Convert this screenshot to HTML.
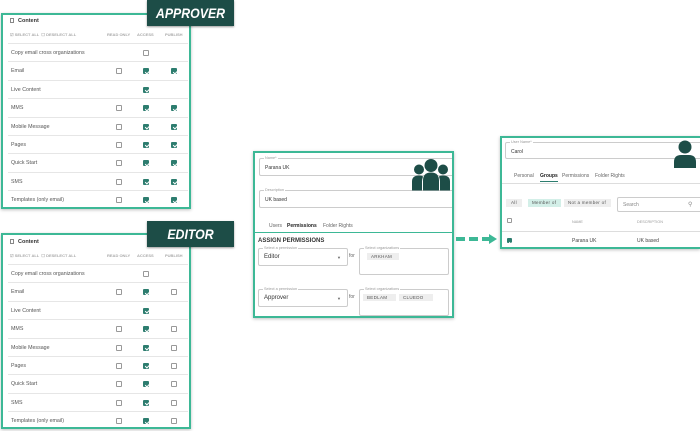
<!DOCTYPE html>
<html><head><meta charset="utf-8"><style>
*{box-sizing:border-box;margin:0;padding:0}
body{width:700px;height:430px;background:#fff;position:relative;overflow:hidden;font-family:"Liberation Sans",sans-serif;color:#444}
.a{position:absolute}
.panel{position:absolute;left:1px;width:190px;height:196px;border:2px solid #3db896;background:#fff;box-shadow:0 1px 3px rgba(0,0,0,.25)}
.hd{position:absolute;left:7px;top:3px;font-size:5.5px;color:#333;font-weight:bold}
.hd i{display:inline-block;width:4px;height:5px;border:1px solid #888;margin-right:4px;vertical-align:-1px}
.sel{position:absolute;left:7px;top:17px;font-size:4px;color:#aaa;font-weight:bold;width:176px}
.sel span{position:absolute;top:0}
.rows{position:absolute;left:5px;top:28px;width:180px;border-top:1px solid #e6e6e6}
.r{position:relative;height:18.4px;border-bottom:1px solid #e6e6e6;font-size:5.3px;color:#555}
.r b{font-weight:normal;position:absolute;left:3px;top:6px}
.cb{position:absolute;top:6px;width:6px;height:6px;border:1px solid #999;border-radius:1px}
.ck{background:#2d7d6f;border-color:#2d7d6f}
.ck:after{content:"";position:absolute;left:1.5px;top:0.5px;width:1.5px;height:2.5px;border:solid #fff;border-width:0 .8px .8px 0;transform:rotate(45deg)}
.c1{left:108px}.c2{left:135px}.c3{left:163px}
.lab{position:absolute;left:147px;width:87px;height:26px;background:#1d4d47;color:#fff;box-shadow:0 1px 2px rgba(0,0,0,.4)}
.lab span{position:absolute;left:0;right:0;top:0;text-align:center;line-height:26px;font-weight:bold;font-style:italic;font-size:14px;transform:scaleX(.88)}
.fld{position:absolute;border:1px solid #ccc;border-radius:2px;font-size:5px;color:#333}
.fld .l{position:absolute;top:-3px;left:4px;background:#fff;padding:0 1px;font-size:3.8px;color:#999}
.fld .v{position:absolute;left:5px;top:6px}
.chip{position:absolute;background:#eee;font-size:4.5px;color:#555;line-height:7px;padding:0 4px;letter-spacing:.3px}
.t{position:absolute;font-size:5px;color:#666}
</style></head><body>

<div class="panel" style="top:13px">
 <div class="hd"><i></i>Content</div>
 <div class="sel"><span style="left:0">☑ SELECT ALL &nbsp;☐ DESELECT ALL</span><span style="left:97px">READ ONLY</span><span style="left:127px">ACCESS</span><span style="left:155px">PUBLISH</span></div>
 <div class="rows">
  <div class="r"><b>Copy email cross organizations</b><i class="cb c2"></i></div>
  <div class="r"><b>Email</b><i class="cb c1"></i><i class="cb c2 ck"></i><i class="cb c3 ck"></i></div>
  <div class="r"><b>Live Content</b><i class="cb c2 ck"></i></div>
  <div class="r"><b>MMS</b><i class="cb c1"></i><i class="cb c2 ck"></i><i class="cb c3 ck"></i></div>
  <div class="r"><b>Mobile Message</b><i class="cb c1"></i><i class="cb c2 ck"></i><i class="cb c3 ck"></i></div>
  <div class="r"><b>Pages</b><i class="cb c1"></i><i class="cb c2 ck"></i><i class="cb c3 ck"></i></div>
  <div class="r"><b>Quick Start</b><i class="cb c1"></i><i class="cb c2 ck"></i><i class="cb c3 ck"></i></div>
  <div class="r"><b>SMS</b><i class="cb c1"></i><i class="cb c2 ck"></i><i class="cb c3 ck"></i></div>
  <div class="r" style="border:0"><b>Templates (only email)</b><i class="cb c1"></i><i class="cb c2 ck"></i><i class="cb c3 ck"></i></div>
 </div>
</div>
<div class="lab" style="top:0"><span>APPROVER</span></div>

<div class="panel" style="top:233px">
 <div class="hd" style="top:4px"><i></i>Content</div>
 <div class="sel" style="top:18px"><span style="left:0">☑ SELECT ALL &nbsp;☐ DESELECT ALL</span><span style="left:97px">READ ONLY</span><span style="left:127px">ACCESS</span><span style="left:155px">PUBLISH</span></div>
 <div class="rows" style="top:29px">
  <div class="r"><b>Copy email cross organizations</b><i class="cb c2"></i></div>
  <div class="r"><b>Email</b><i class="cb c1"></i><i class="cb c2 ck"></i><i class="cb c3"></i></div>
  <div class="r"><b>Live Content</b><i class="cb c2 ck"></i></div>
  <div class="r"><b>MMS</b><i class="cb c1"></i><i class="cb c2 ck"></i><i class="cb c3"></i></div>
  <div class="r"><b>Mobile Message</b><i class="cb c1"></i><i class="cb c2 ck"></i><i class="cb c3"></i></div>
  <div class="r"><b>Pages</b><i class="cb c1"></i><i class="cb c2 ck"></i><i class="cb c3"></i></div>
  <div class="r"><b>Quick Start</b><i class="cb c1"></i><i class="cb c2 ck"></i><i class="cb c3"></i></div>
  <div class="r"><b>SMS</b><i class="cb c1"></i><i class="cb c2 ck"></i><i class="cb c3"></i></div>
  <div class="r" style="border:0"><b>Templates (only email)</b><i class="cb c1"></i><i class="cb c2 ck"></i><i class="cb c3"></i></div>
 </div>
</div>
<div class="lab" style="top:221px"><span>EDITOR</span></div>

<div class="a" style="left:253px;top:151px;width:201px;height:167px;border:2px solid #3db896;background:#fff;overflow:hidden;box-shadow:0 1px 3px rgba(0,0,0,.25)">
 <div class="fld" style="left:4px;top:5px;width:200px;height:18px"><span class="l">Name*</span><span class="v">Parana UK</span></div>
 <div class="fld" style="left:4px;top:37px;width:200px;height:18px"><span class="l">Description</span><span class="v">UK based</span></div>
 <svg class="a" style="left:156px;top:5px" width="40" height="33" viewBox="0 0 40 32" fill="#1d4d47">
  <circle cx="20" cy="7" r="6.5"/><circle cx="8" cy="11" r="5"/><circle cx="32" cy="11" r="5"/>
  <path d="M12 32V22q0-8 8-8t8 8v10z"/><path d="M1 32V23q0-6 7-6q3 0 4 1q-1 3-1 5v9z"/><path d="M39 32V23q0-6-7-6q-3 0-4 1q1 3 1 5v9z"/>
 </svg>
 <div class="t" style="left:14px;top:70px">Users</div>
 <div class="t" style="left:32px;top:70px;color:#222;font-weight:bold">Permissions</div>
 <div class="t" style="left:68px;top:70px">Folder Rights</div>
 <div class="a" style="left:0;top:79px;width:201px;height:1px;background:#3db896"></div>
 <div class="a" style="left:3px;top:85px;font-size:6px;font-weight:bold;color:#333">ASSIGN PERMISSIONS</div>
 <div class="fld" style="left:3px;top:95px;width:90px;height:18px"><span class="l">Select a permission</span><span class="v" style="font-size:6px;top:5px">Editor</span><span class="a" style="right:6px;top:6px;font-size:4px;color:#666">▼</span></div>
 <div class="t" style="left:94px;top:100px">for</div>
 <div class="fld" style="left:104px;top:95px;width:90px;height:27px"><span class="l">Select organizations</span></div>
 <div class="chip" style="left:112px;top:100px;width:32px">ARKHAM</div>
 <div class="fld" style="left:3px;top:136px;width:90px;height:18px"><span class="l">Select a permission</span><span class="v" style="font-size:6px;top:5px">Approver</span><span class="a" style="right:6px;top:6px;font-size:4px;color:#666">▼</span></div>
 <div class="t" style="left:94px;top:141px">for</div>
 <div class="fld" style="left:104px;top:136px;width:90px;height:27px"><span class="l">Select organizations</span></div>
 <div class="chip" style="left:108px;top:141px;width:33px">BEDLAM</div>
 <div class="chip" style="left:144px;top:141px;width:34px">CLUEDO</div>
</div>

<div class="a" style="left:456px;top:237px;width:9px;height:4px;background:#3db896"></div>
<div class="a" style="left:469px;top:237px;width:9px;height:4px;background:#3db896"></div>
<div class="a" style="left:482px;top:237px;width:8px;height:4px;background:#3db896"></div>
<div class="a" style="left:489px;top:234px;width:0;height:0;border-left:8px solid #3db896;border-top:5px solid transparent;border-bottom:5px solid transparent"></div>

<div class="a" style="left:500px;top:136px;width:200px;height:113px;border:2px solid #3db896;border-right:0;background:#fff;overflow:hidden;box-shadow:0 1px 3px rgba(0,0,0,.25)">
 <div class="fld" style="left:3px;top:4px;width:200px;height:17px"><span class="l">User Name*</span><span class="v">Carol</span></div>
 <svg class="a" style="left:171px;top:2px" width="24" height="28" viewBox="0 0 24 28" fill="#1d4d47"><circle cx="12" cy="7" r="6.5"/><path d="M1 28v-6q0-7 7-7h8q7 0 7 7v6z"/></svg>
 <div class="t" style="left:12px;top:35px">Personal</div>
 <div class="t" style="left:38px;top:35px;color:#222;font-weight:bold">Groups</div>
 <div class="a" style="left:38px;top:43px;width:18px;height:1px;background:#2d7d6f"></div>
 <div class="t" style="left:60px;top:35px">Permissions</div>
 <div class="t" style="left:93px;top:35px">Folder Rights</div>
 <div class="a" style="left:0;top:45px;width:200px;height:1px;background:#ddd"></div>
 <div class="chip" style="left:4px;top:61px;height:8px;padding:0 5px;font-size:4.5px">All</div>
 <div class="chip" style="left:26px;top:61px;height:8px;width:33px;background:#d3efe8;font-size:4.5px">Member of</div>
 <div class="chip" style="left:62px;top:61px;height:8px;width:47px;font-size:4.5px">Not a member of</div>
 <div class="fld" style="left:115px;top:59px;width:85px;height:15px"><span class="v" style="top:4px;color:#888">Search</span><span class="a" style="left:70px;top:3px;font-size:6px;color:#888">⚲</span></div>
 <div class="cb" style="left:5px;top:80px;width:5px;height:5px"></div>
 <div class="a" style="left:70px;top:82px;font-size:3.8px;color:#999">NAME</div>
 <div class="a" style="left:135px;top:82px;font-size:3.8px;color:#999">DESCRIPTION</div>
 <div class="a" style="left:0;top:93px;width:200px;height:1px;background:#ddd"></div>
 <div class="cb ck" style="left:5px;top:100px;width:5px;height:5px"></div>
 <div class="t" style="left:70px;top:100px;color:#444">Parana UK</div>
 <div class="t" style="left:135px;top:100px;color:#444">UK based</div>
</div>
</body></html>
